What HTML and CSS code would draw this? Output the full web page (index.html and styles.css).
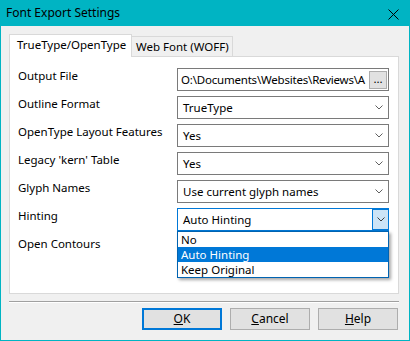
FILE: index.html
```html
<!doctype html>
<html lang="en">
<head>
  <meta charset="utf-8">
  <title>Font Export Settings</title>
  <link rel="stylesheet" href="styles.css">
</head>
<body>
  <div class="window">
    <div class="titlebar">
      <span class="title">Font Export Settings</span>
      <svg class="close" width="11" height="11" viewBox="0 0 11 11">
        <path d="M0.5 0.5 L10.5 10.5 M10.5 0.5 L0.5 10.5" stroke="#000" stroke-width="1" fill="none"/>
      </svg>
    </div>
    <div class="client">
      <div class="tabs">
        <div class="tab active">TrueType/OpenType</div>
        <div class="tab">Web Font (WOFF)</div>
      </div>
      <div class="panel">
        <div class="row">
          <span class="label">Output File</span>
          <div class="field">
            <span class="field-text">O:\Documents\Websites\Reviews\A</span>
            <span class="browse">...</span>
          </div>
        </div>
        <div class="row">
          <span class="label">Outline Format</span>
          <div class="combo"><span class="value">TrueType</span><span class="arrow"><svg width="8" height="5" viewBox="0 0 8 5"><path d="M0.5 0.5 L4 4 L7.5 0.5" stroke="#606060" fill="none"/></svg></span></div>
        </div>
        <div class="row">
          <span class="label">OpenType Layout Features</span>
          <div class="combo"><span class="value">Yes</span><span class="arrow"><svg width="8" height="5" viewBox="0 0 8 5"><path d="M0.5 0.5 L4 4 L7.5 0.5" stroke="#606060" fill="none"/></svg></span></div>
        </div>
        <div class="row">
          <span class="label">Legacy 'kern' Table</span>
          <div class="combo"><span class="value">Yes</span><span class="arrow"><svg width="8" height="5" viewBox="0 0 8 5"><path d="M0.5 0.5 L4 4 L7.5 0.5" stroke="#606060" fill="none"/></svg></span></div>
        </div>
        <div class="row">
          <span class="label">Glyph Names</span>
          <div class="combo"><span class="value">Use current glyph names</span><span class="arrow"><svg width="8" height="5" viewBox="0 0 8 5"><path d="M0.5 0.5 L4 4 L7.5 0.5" stroke="#606060" fill="none"/></svg></span></div>
        </div>
        <div class="row">
          <span class="label">Hinting</span>
          <div class="combo open"><span class="value">Auto Hinting</span><span class="arrow"><svg width="8" height="5" viewBox="0 0 8 5"><path d="M0.5 0.5 L4 4 L7.5 0.5" stroke="#404040" fill="none"/></svg></span>
            <div class="list">
              <div class="item">No</div>
              <div class="item selected">Auto Hinting</div>
              <div class="item">Keep Original</div>
            </div>
          </div>
        </div>
        <div class="row">
          <span class="label">Open Contours</span>
          <div class="combo"></div>
        </div>
      </div>
      <div class="separator"></div>
      <div class="buttons">
        <button class="btn default"><u>O</u>K</button>
        <button class="btn"><u>C</u>ancel</button>
        <button class="btn"><u>H</u>elp</button>
      </div>
    </div>
  </div>
</body>
</html>
```

FILE: styles.css
```css
body {
  margin:0;
  font-family:'Noto Sans', 'Open Sans', sans-serif;
  font-size:11.5px;
  color:#000;
}
.window {
  width:410px;
  height:341px;
  box-sizing:border-box;
  background:#00b4c3;
  padding:0 1px 1px;
  display:flex;
  flex-direction:column;
}
.titlebar {
  height:26px;
  display:flex;
  align-items:center;
  padding-left:5px;
}
.title {
  font-size:12px;
  line-height:16px;
}
.close {
  margin-left:auto;
  margin-right:10px;
  margin-top:2px;
}
.client {
  flex:1;
  background:#f0f0f0;
  padding:8px 10px 0 8px;
}
.tabs {
  display:flex;
  align-items:flex-end;
}
.tab {
  height:20px;
  box-sizing:border-box;
  width:101px;
  border:1px solid #d9d9d9;
  border-left:none;
  border-bottom:none;
  padding-left:4px;
  line-height:19px;
  white-space:nowrap;
  background:#f0f0f0;
}
.tab.active {
  width:123px;
  height:23px;
  margin-bottom:-1px;
  border-left:1px solid #d9d9d9;
  background:#fff;
  padding-left:7px;
  line-height:20px;
  position:relative;
  z-index:1;
}
.panel {
  height:238px;
  box-sizing:border-box;
  background:#fff;
  border:1px solid #d9d9d9;
  padding:11px 9px 0 8px;
}
.row {
  display:flex;
  height:23px;
  margin-bottom:5px;
}
.label {
  width:159px;
  line-height:16px;
  white-space:nowrap;
}
.field,
.combo {
  width:212px;
  height:23px;
  box-sizing:border-box;
  border:1px solid #7a7a7a;
  background:#fff;
  display:flex;
  align-items:center;
}
.field {
  padding-left:3px;
}
.field-text {
  flex:1;
  overflow:hidden;
  white-space:nowrap;
  line-height:16px;
  letter-spacing:-0.2px;
}
.browse {
  width:18px;
  height:18px;
  box-sizing:border-box;
  background:#e1e1e1;
  border:1px solid #adadad;
  margin:0 1px 0 0;
  text-align:center;
  line-height:14px;
}
.combo {
  padding-left:5px;
  position:relative;
}
.value {
  flex:1;
  line-height:16px;
}
.arrow {
  width:16px;
  height:21px;
  box-sizing:border-box;
  display:flex;
  align-items:center;
  justify-content:center;
  margin-right:1px;
}
.combo.open {
  border-color:#0078d7;
}
.combo.open .arrow {
  background:#cce4f7;
  border:1px solid #0078d7;
  border-right:none;
  margin-right:0;
}
.list {
  position:absolute;
  left:-1px;
  top:22px;
  width:212px;
  box-sizing:border-box;
  border:1px solid #0063b1;
  background:#fff;
  box-shadow:2px 2px 3px rgba(0,0,0,0.35);
  z-index:2;
}
.item {
  height:15px;
  line-height:15px;
  padding-left:3px;
}
.item.selected {
  background:#0078d7;
  color:#fff;
}
.separator {
  margin-top:7px;
  border-top:1px solid #a0a0a0;
  border-bottom:1px solid #fff;
}
.buttons {
  display:flex;
  justify-content:flex-end;
  gap:8px;
  margin-top:5px;
  padding-right:1px;
}
.btn {
  width:80px;
  height:22px;
  box-sizing:border-box;
  background:#e1e1e1;
  border:1px solid #adadad;
  font-family:'Noto Sans', 'Open Sans', sans-serif;
  font-size:12px;
  padding:0;
  line-height:18px;
  color:#000;
}
.btn.default {
  border:2px solid #0078d7;
  line-height:16px;
}
```
